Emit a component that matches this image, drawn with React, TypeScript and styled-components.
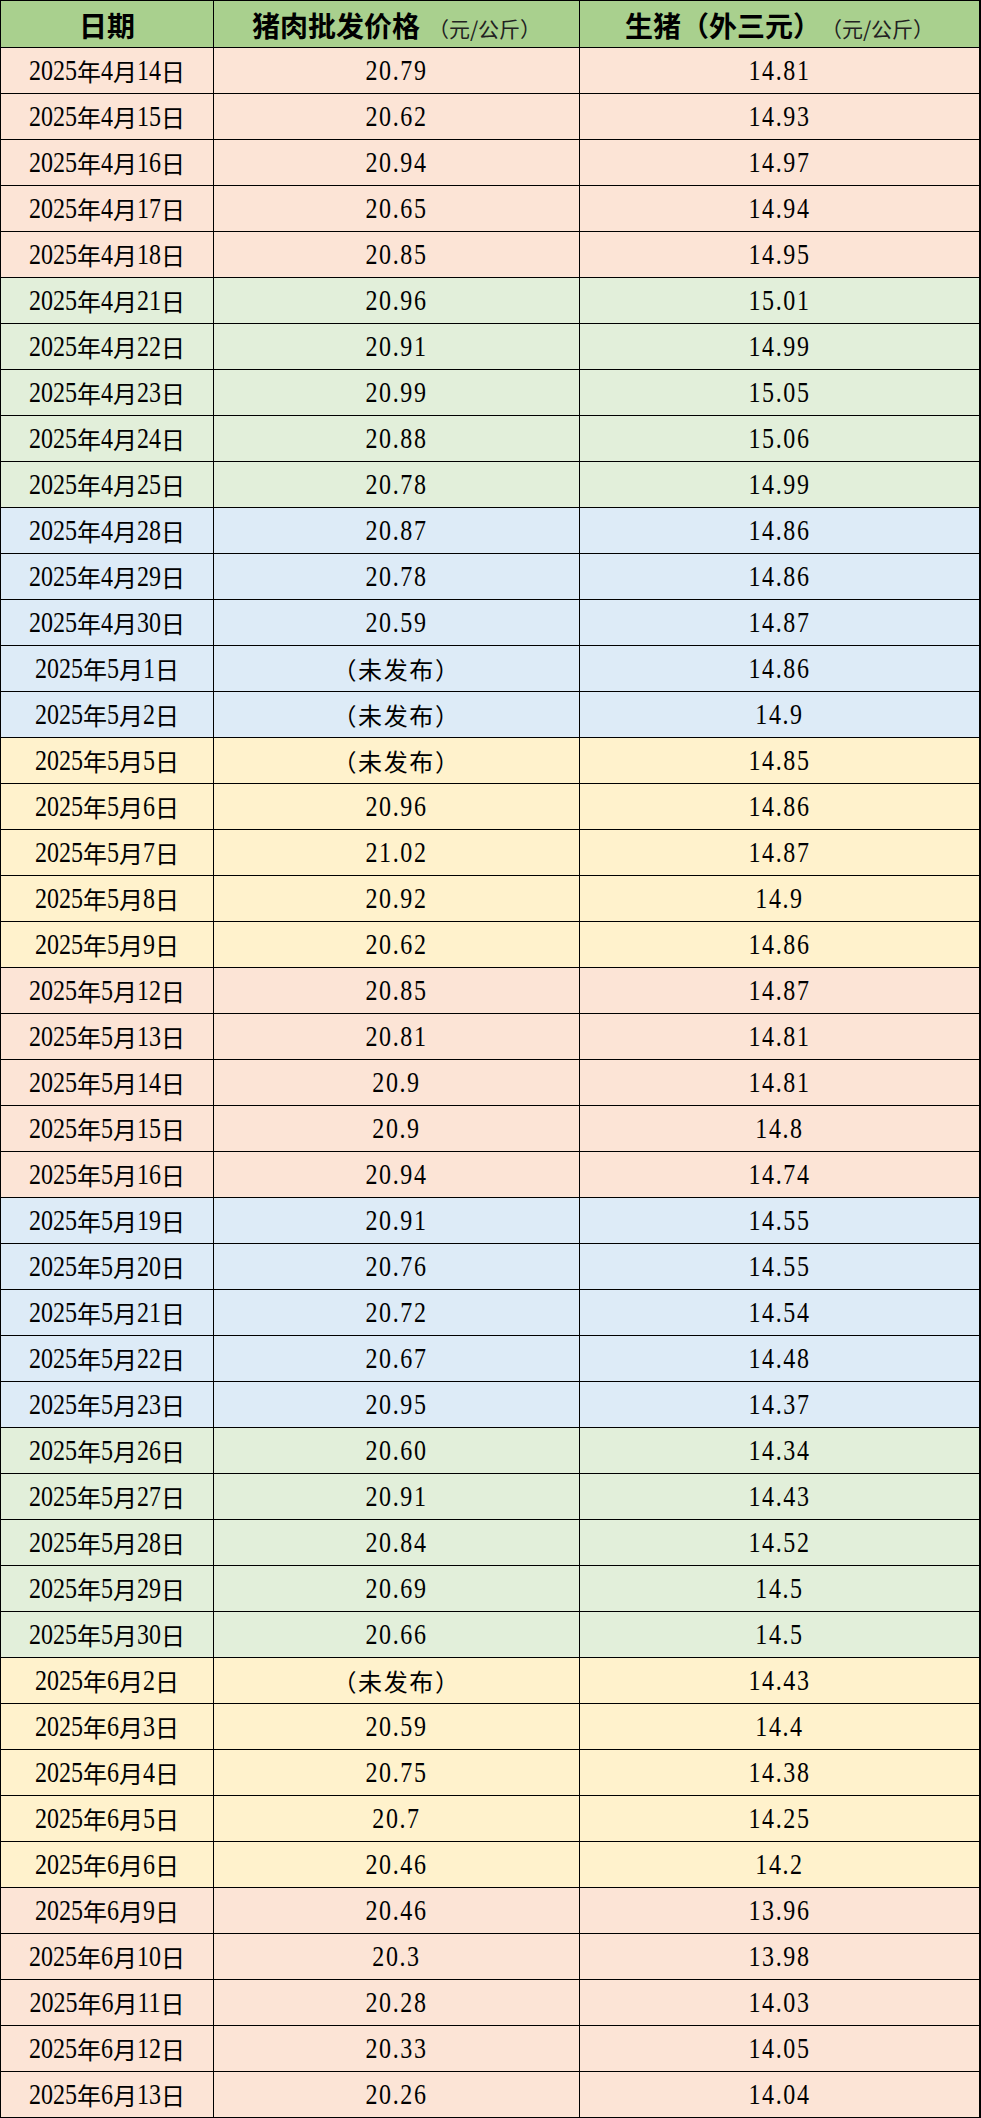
import React from 'react';
import styled, { createGlobalStyle } from 'styled-components';

type Tone = 'pink' | 'green' | 'blue' | 'yellow';

const tones: Record<Tone, string> = {
  pink: '#fce4d6',
  green: '#e2efda',
  blue: '#ddebf7',
  yellow: '#fff2cc',
};

const GlobalStyle = createGlobalStyle`
  html, body {
    margin: 0;
    padding: 0;
    background: #ffffff;
  }
`;

const Table = styled.div`
  width: 981px;
  box-sizing: border-box;
  border: 1px solid #000;
  border-right-width: 2px;
  border-bottom-width: 2px;
  font-family: 'Liberation Serif', 'Noto Sans CJK SC', serif;
  color: #000;
`;

const Row = styled.div<{ $bg: string }>`
  display: grid;
  grid-template-columns: 212px 366px 1fr;
  height: 46px;
  box-sizing: border-box;
  background: ${(p) => p.$bg};
  & + & {
    border-top: 1px solid #000;
  }
`;

const Cell = styled.div<{ $spaced?: boolean }>`
  display: flex;
  align-items: center;
  justify-content: center;
  white-space: nowrap;
  font-size: 24px;
  letter-spacing: ${(p) => (p.$spaced ? '1.6px' : '0')};
  & + & {
    border-left: 1px solid #000;
  }
`;

const HeadCell = styled(Cell)`
  font-family: 'Noto Sans CJK SC', sans-serif;
  font-size: 28px;
  font-weight: 700;
  align-items: baseline;
  padding-top: 4px;
  box-sizing: border-box;
`;

const Unit = styled.span<{ $gap?: number }>`
  font-family: 'Noto Sans CJK SC', sans-serif;
  font-size: 21px;
  font-weight: 400;
  color: #222;
  margin-left: ${(p) => p.$gap ?? 0}px;
`;

const Num = styled.span`
  display: inline-block;
  transform: scaleY(1.25);
`;

type Item = [string, string, string, Tone];

const rows: Item[] = [
  ['2025年4月14日', '20.79', '14.81', 'pink'],
  ['2025年4月15日', '20.62', '14.93', 'pink'],
  ['2025年4月16日', '20.94', '14.97', 'pink'],
  ['2025年4月17日', '20.65', '14.94', 'pink'],
  ['2025年4月18日', '20.85', '14.95', 'pink'],
  ['2025年4月21日', '20.96', '15.01', 'green'],
  ['2025年4月22日', '20.91', '14.99', 'green'],
  ['2025年4月23日', '20.99', '15.05', 'green'],
  ['2025年4月24日', '20.88', '15.06', 'green'],
  ['2025年4月25日', '20.78', '14.99', 'green'],
  ['2025年4月28日', '20.87', '14.86', 'blue'],
  ['2025年4月29日', '20.78', '14.86', 'blue'],
  ['2025年4月30日', '20.59', '14.87', 'blue'],
  ['2025年5月1日', '（未发布）', '14.86', 'blue'],
  ['2025年5月2日', '（未发布）', '14.9', 'blue'],
  ['2025年5月5日', '（未发布）', '14.85', 'yellow'],
  ['2025年5月6日', '20.96', '14.86', 'yellow'],
  ['2025年5月7日', '21.02', '14.87', 'yellow'],
  ['2025年5月8日', '20.92', '14.9', 'yellow'],
  ['2025年5月9日', '20.62', '14.86', 'yellow'],
  ['2025年5月12日', '20.85', '14.87', 'pink'],
  ['2025年5月13日', '20.81', '14.81', 'pink'],
  ['2025年5月14日', '20.9', '14.81', 'pink'],
  ['2025年5月15日', '20.9', '14.8', 'pink'],
  ['2025年5月16日', '20.94', '14.74', 'pink'],
  ['2025年5月19日', '20.91', '14.55', 'blue'],
  ['2025年5月20日', '20.76', '14.55', 'blue'],
  ['2025年5月21日', '20.72', '14.54', 'blue'],
  ['2025年5月22日', '20.67', '14.48', 'blue'],
  ['2025年5月23日', '20.95', '14.37', 'blue'],
  ['2025年5月26日', '20.60', '14.34', 'green'],
  ['2025年5月27日', '20.91', '14.43', 'green'],
  ['2025年5月28日', '20.84', '14.52', 'green'],
  ['2025年5月29日', '20.69', '14.5', 'green'],
  ['2025年5月30日', '20.66', '14.5', 'green'],
  ['2025年6月2日', '（未发布）', '14.43', 'yellow'],
  ['2025年6月3日', '20.59', '14.4', 'yellow'],
  ['2025年6月4日', '20.75', '14.38', 'yellow'],
  ['2025年6月5日', '20.7', '14.25', 'yellow'],
  ['2025年6月6日', '20.46', '14.2', 'yellow'],
  ['2025年6月9日', '20.46', '13.96', 'pink'],
  ['2025年6月10日', '20.3', '13.98', 'pink'],
  ['2025年6月11日', '20.28', '14.03', 'pink'],
  ['2025年6月12日', '20.33', '14.05', 'pink'],
  ['2025年6月13日', '20.26', '14.04', 'pink'],
];

// digits look tall and narrow in the source, stretch only the digit runs
const tall = (text: string) =>
  text.split(/(\d[\d.]*)/).map((part, i) =>
    /^\d/.test(part) ? <Num key={i}>{part}</Num> : <React.Fragment key={i}>{part}</React.Fragment>
  );

export default function App() {
  return (
    <>
      <GlobalStyle />
      <Table>
        <Row $bg="#a9d08e">
          <HeadCell>日期</HeadCell>
          <HeadCell>
            猪肉批发价格<Unit $gap={8}>（元/公斤）</Unit>
          </HeadCell>
          <HeadCell>
            生猪（外三元）<Unit>（元/公斤）</Unit>
          </HeadCell>
        </Row>
        {rows.map(([date, pork, hog, tone]) => (
          <Row key={date} $bg={tones[tone]}>
            <Cell>{tall(date)}</Cell>
            <Cell $spaced>{tall(pork)}</Cell>
            <Cell $spaced>{tall(hog)}</Cell>
          </Row>
        ))}
      </Table>
    </>
  );
}
